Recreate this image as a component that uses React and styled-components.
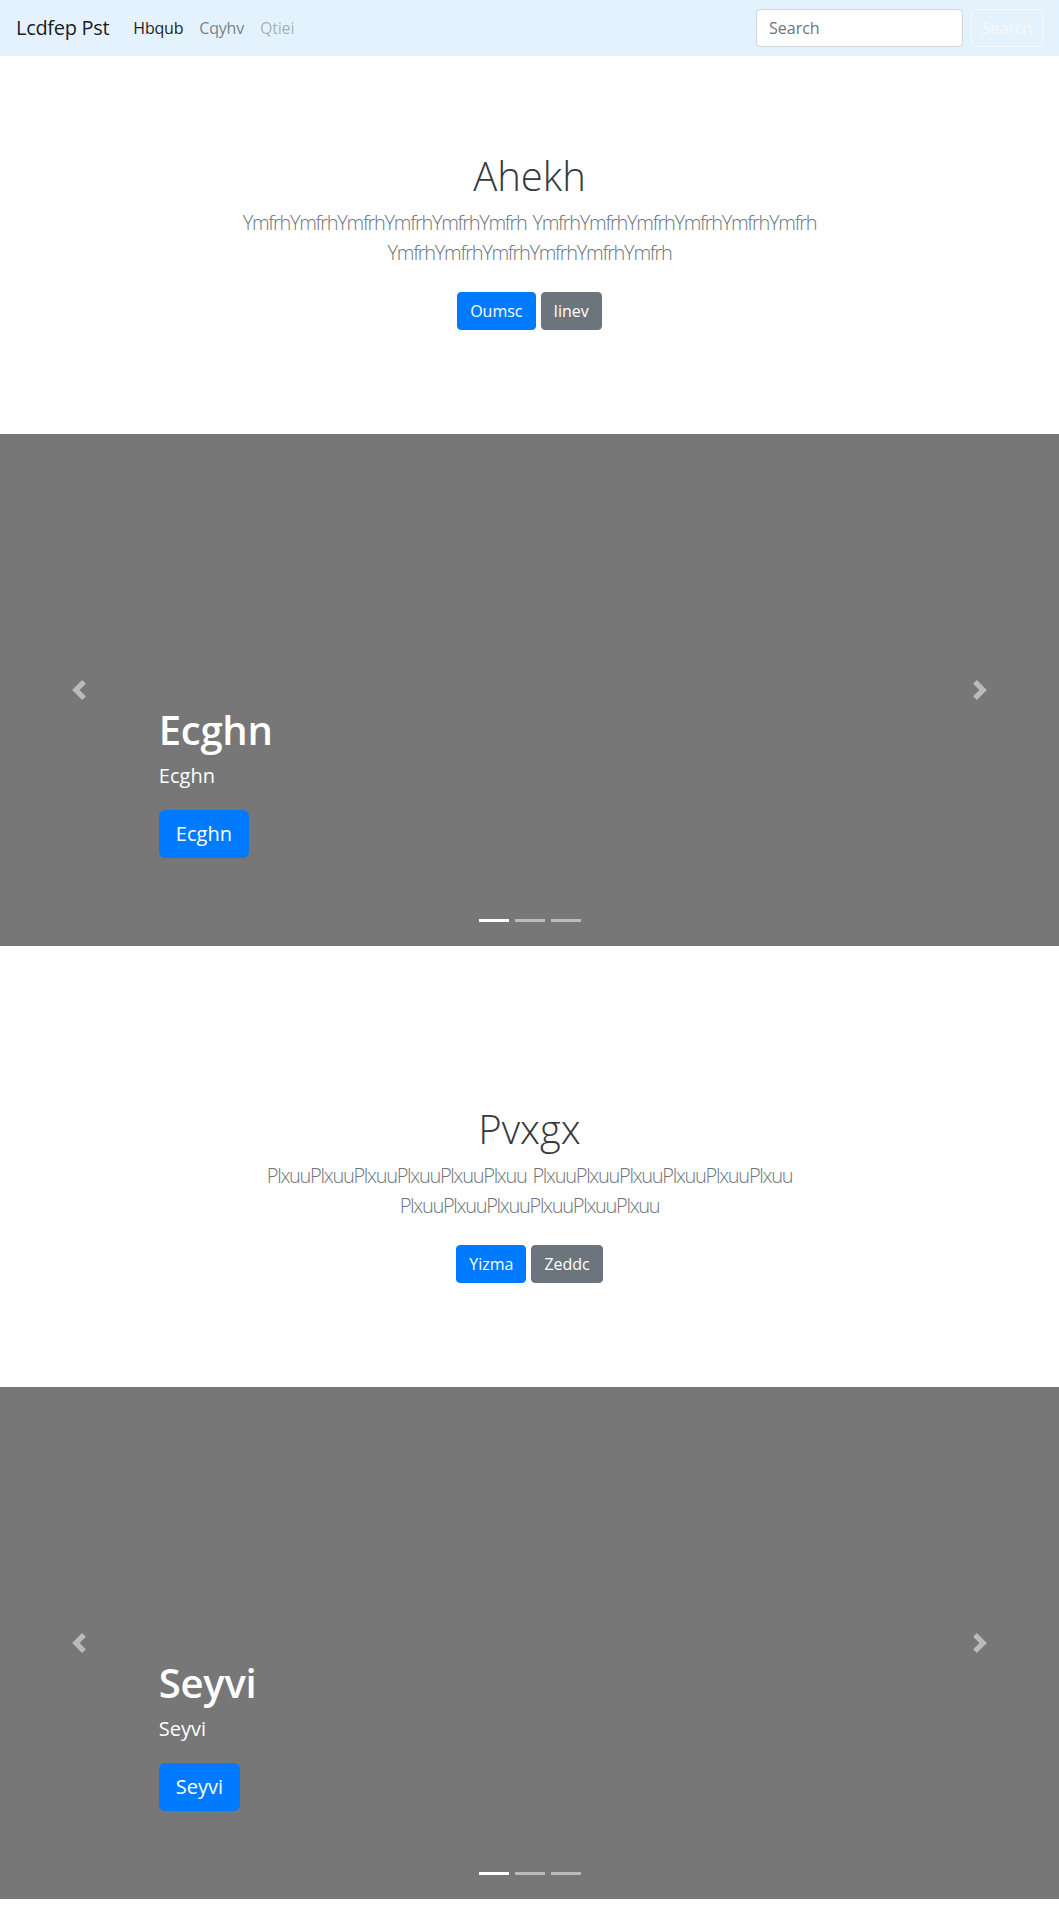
import React from "react";
import styled, { createGlobalStyle } from "styled-components";

const GlobalStyle = createGlobalStyle`
  * { box-sizing: border-box; }
  body {
    margin: 0;
    font-family: "Open Sans", "Noto Sans", sans-serif;
    font-size: 16px;
    line-height: 1.5;
    color: #212529;
    background: #fff;
  }
`;

const Navbar = styled.nav`
  display: flex;
  align-items: center;
  justify-content: space-between;
  height: 56px;
  padding: 8px 16px;
  background: #e3f2fd;
`;

const NavLeft = styled.div`
  display: flex;
  align-items: center;
`;

const Brand = styled.a`
  font-size: 20px;
  line-height: 30px;
  margin-right: 16px;
  color: rgba(0, 0, 0, 0.9);
  text-decoration: none;
  letter-spacing: -0.3px;
`;

const NavLink = styled.a`
  padding: 8px 8px;
  font-size: 16px;
  text-decoration: none;
  letter-spacing: -0.2px;
  color: ${(p) =>
    p.$state === "active"
      ? "rgba(0,0,0,0.9)"
      : p.$state === "disabled"
      ? "rgba(0,0,0,0.3)"
      : "rgba(0,0,0,0.5)"};
`;

const SearchForm = styled.form`
  display: flex;
  align-items: center;
  gap: 8px;
`;

const SearchInput = styled.input`
  width: 207px;
  height: 38px;
  padding: 6px 12px;
  font-family: inherit;
  font-size: 16px;
  color: #495057;
  background: #fff;
  border: 1px solid #ced4da;
  border-radius: 4px;
  &::placeholder { color: #6c757d; }
`;

const OutlineButton = styled.button`
  width: 72px;
  height: 38px;
  padding: 6px 0;
  font-family: inherit;
  font-size: 16px;
  color: #f8f9fa;
  background: transparent;
  border: 1px solid #f8f9fa;
  border-radius: 4px;
`;

const Hero = styled.section`
  padding: ${(p) => p.$top}px 15px 96px;
  text-align: center;
  background: #fff;
`;

const HeroInner = styled.div`
  max-width: 640px;
  margin: 0 auto;
  padding: 0 15px;
`;

const HeroTitle = styled.h1`
  margin: 0 0 8px;
  font-size: 40px;
  font-weight: 300;
  line-height: 1.2;
  color: #343a40;
`;

const Lead = styled.p`
  margin: 0 0 16px;
  font-size: 20px;
  font-weight: 300;
  line-height: 30px;
  color: #6c757d;
  letter-spacing: -1.3px;
  word-spacing: 2px;
`;

const ButtonRow = styled.div`
  display: flex;
  justify-content: center;
  gap: 5px;
  padding: 8px 0;
`;

const Btn = styled.a`
  display: inline-block;
  padding: ${(p) => (p.$lg ? "8px 16px" : "6px 12px")};
  font-size: ${(p) => (p.$lg ? "20px" : "16px")};
  line-height: 1.5;
  color: #fff;
  text-decoration: none;
  border: 1px solid ${(p) => (p.$variant === "secondary" ? "#6c757d" : "#007bff")};
  background: ${(p) => (p.$variant === "secondary" ? "#6c757d" : "#007bff")};
  border-radius: ${(p) => (p.$lg ? "6px" : "4px")};
`;

const Carousel = styled.section`
  position: relative;
  height: 512px;
  background: #777;
  overflow: hidden;
`;

const Caption = styled.div`
  position: absolute;
  left: 15%;
  right: 15%;
  bottom: 48px;
  padding: 20px 0;
  color: #fff;
  text-align: left;
`;

const CaptionTitle = styled.h1`
  margin: 0 0 8px;
  font-size: 40px;
  font-weight: 600;
  line-height: 1.2;
  letter-spacing: -0.3px;
`;

const CaptionText = styled.p`
  margin: 0 0 20px;
  font-size: 20px;
  line-height: 1.4;
`;

const CaptionAction = styled.div`
  margin: 0 0 20px;
  display: flex;
`;

const Control = styled.a`
  position: absolute;
  top: 0;
  bottom: 0;
  ${(p) => (p.$side === "prev" ? "left: 0;" : "right: 0;")}
  width: 15%;
  display: flex;
  align-items: center;
  justify-content: center;
  opacity: 0.5;
`;

const Indicators = styled.ol`
  position: absolute;
  left: 0;
  right: 0;
  bottom: 0;
  display: flex;
  justify-content: center;
  margin: 0 15% 14px;
  padding: 0;
  list-style: none;
`;

const Indicator = styled.li`
  box-sizing: content-box;
  width: 30px;
  height: 3px;
  margin: 0 3px;
  background: #fff;
  background-clip: padding-box;
  border-top: 10px solid transparent;
  border-bottom: 10px solid transparent;
  opacity: ${(p) => (p.$active ? 1 : 0.5)};
`;

const Chevron = ({ dir }) => (
  <svg width="20" height="20" viewBox="0 0 8 8" fill="#fff">
    <path
      d={
        dir === "prev"
          ? "M5.25 0l-4 4 4 4 1.5-1.5L4.25 4l2.5-2.5L5.25 0z"
          : "M2.75 0l-1.5 1.5L3.75 4l-2.5 2.5L2.75 8l4-4-4-4z"
      }
    />
  </svg>
);

const Slide = ({ title }) => (
  <Carousel>
    <Indicators>
      <Indicator $active />
      <Indicator />
      <Indicator />
    </Indicators>
    <Caption>
      <CaptionTitle>{title}</CaptionTitle>
      <CaptionText>{title}</CaptionText>
      <CaptionAction>
        <Btn $lg href="#">{title}</Btn>
      </CaptionAction>
    </Caption>
    <Control $side="prev" href="#">
      <Chevron dir="prev" />
    </Control>
    <Control $side="next" href="#">
      <Chevron dir="next" />
    </Control>
  </Carousel>
);

const HeroBlock = ({ top, title, word, primary, secondary }) => {
  const w = word.repeat(6);
  return (
    <Hero $top={top}>
      <HeroInner>
        <HeroTitle>{title}</HeroTitle>
        <Lead>
          {w} {w} {w}
        </Lead>
        <ButtonRow>
          <Btn href="#">{primary}</Btn>
          <Btn $variant="secondary" href="#">{secondary}</Btn>
        </ButtonRow>
      </HeroInner>
    </Hero>
  );
};

export default function App() {
  return (
    <>
      <GlobalStyle />
      <Navbar>
        <NavLeft>
          <Brand href="#">Lcdfep Pst</Brand>
          <NavLink $state="active" href="#">Hbqub</NavLink>
          <NavLink href="#">Cqyhv</NavLink>
          <NavLink $state="disabled" href="#">Qtiei</NavLink>
        </NavLeft>
        <SearchForm onSubmit={(e) => e.preventDefault()}>
          <SearchInput type="search" placeholder="Search" />
          <OutlineButton type="submit">Search</OutlineButton>
        </SearchForm>
      </Navbar>
      <HeroBlock top={96} title="Ahekh" word="Ymfrh" primary="Oumsc" secondary="Iinev" />
      <Slide title="Ecghn" />
      <HeroBlock top={159} title="Pvxgx" word="Plxuu" primary="Yizma" secondary="Zeddc" />
      <Slide title="Seyvi" />
    </>
  );
}
